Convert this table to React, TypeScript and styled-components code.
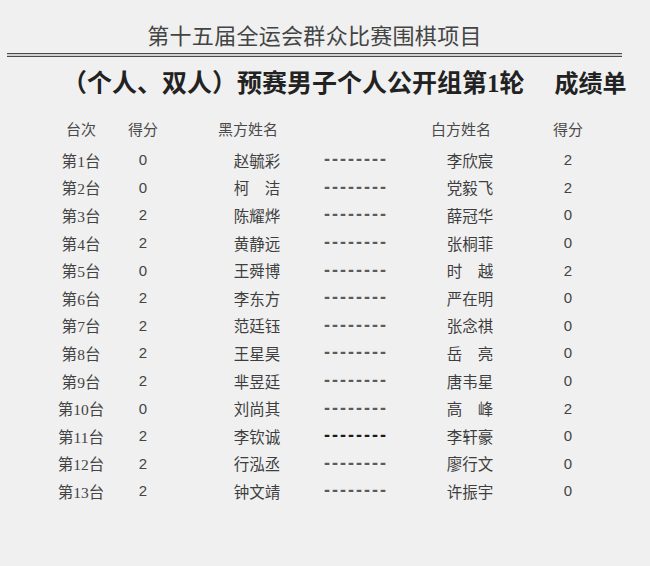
import styled, { createGlobalStyle } from "styled-components";

const GlobalStyle = createGlobalStyle`
  html, body {
    margin: 0;
    padding: 0;
    background: #f0f0f0;
  }
  body {
    font-family: "Liberation Serif", "Noto Sans CJK SC", serif;
    color: #3a3a3a;
  }
`;

interface Match {
  no: number;
  blackScore: number;
  black: string;
  white: string;
  whiteScore: number;
  dark?: boolean;
}

const matches: Match[] = [
  { no: 1, blackScore: 0, black: "赵毓彩", white: "李欣宸", whiteScore: 2 },
  { no: 2, blackScore: 0, black: "柯　洁", white: "党毅飞", whiteScore: 2 },
  { no: 3, blackScore: 2, black: "陈耀烨", white: "薛冠华", whiteScore: 0 },
  { no: 4, blackScore: 2, black: "黄静远", white: "张桐菲", whiteScore: 0 },
  { no: 5, blackScore: 0, black: "王舜博", white: "时　越", whiteScore: 2 },
  { no: 6, blackScore: 2, black: "李东方", white: "严在明", whiteScore: 0 },
  { no: 7, blackScore: 2, black: "范廷钰", white: "张念祺", whiteScore: 0 },
  { no: 8, blackScore: 2, black: "王星昊", white: "岳　亮", whiteScore: 0 },
  { no: 9, blackScore: 2, black: "芈昱廷", white: "唐韦星", whiteScore: 0 },
  { no: 10, blackScore: 0, black: "刘尚其", white: "高　峰", whiteScore: 2 },
  { no: 11, blackScore: 2, black: "李钦诚", white: "李轩豪", whiteScore: 0, dark: true },
  { no: 12, blackScore: 2, black: "行泓丞", white: "廖行文", whiteScore: 0 },
  { no: 13, blackScore: 2, black: "钟文靖", white: "许振宇", whiteScore: 0 },
];

const Page = styled.div`
  width: 650px;
  height: 566px;
  padding-top: 19px;
  box-sizing: border-box;
`;

const Masthead = styled.div`
  width: 615px;
  margin-left: 7px;
`;

const Title = styled.h1`
  margin: 0;
  font-family: "Noto Sans CJK SC", sans-serif;
  font-weight: 400;
  font-size: 22px;
  line-height: 30px;
  letter-spacing: 0.3px;
  text-align: center;
  color: #444;
`;

const DoubleRule = styled.div`
  margin-top: 4px;
  height: 2px;
  border-top: 1px solid #4a4a4a;
  border-bottom: 1px solid #4a4a4a;
  background: #cfcfcf;
`;

const Subtitle = styled.h2`
  margin: 11px 0 0 62px;
  font-family: "Liberation Serif", "Noto Sans CJK SC", serif;
  font-weight: 700;
  font-size: 25px;
  line-height: 32px;
  white-space: nowrap;
  color: #222;
`;

const SubtitleTail = styled.span`
  margin-left: 30px;
  font-size: 24px;
`;

const HeaderRow = styled.div`
  display: flex;
  margin: 16px 0 0 50px;
  height: 24px;
  align-items: center;
  font-family: "Noto Sans CJK SC", sans-serif;
  font-size: 15px;
  color: #4a4a4a;
`;

const Rows = styled.div`
  margin: 6px 0 0 50px;
`;

const Row = styled.div`
  display: flex;
  height: 27.6px;
  align-items: center;
  font-size: 15.5px;
`;

const Cell = styled.div<{ $w: number; $ml?: number }>`
  width: ${(p) => p.$w}px;
  margin-left: ${(p) => p.$ml ?? 0}px;
  flex: none;
  text-align: center;
  white-space: nowrap;
`;

const Board = styled(Cell)`
  font-family: "Liberation Serif", "Noto Sans CJK SC", serif;
  color: #444;
`;

const Score = styled(Cell)`
  font-family: "Liberation Sans", sans-serif;
  font-size: 15px;
  color: #444;
`;

const Name = styled(Cell)`
  font-family: "Noto Sans CJK SC", sans-serif;
  font-size: 15.5px;
  color: #3e3e3e;
`;

const Dashes = styled(Cell)<{ $dark?: boolean }>`
  font-family: "Liberation Sans", sans-serif;
  font-size: 18px;
  font-weight: 700;
  letter-spacing: 2px;
  text-indent: 2px;
  color: ${(p) => (p.$dark ? "#1a1a1a" : "#5a5a5a")};
`;

export default function App() {
  return (
    <Page>
      <GlobalStyle />
      <Masthead>
        <Title>第十五届全运会群众比赛围棋项目</Title>
        <DoubleRule />
      </Masthead>
      <Subtitle>
        （个人、双人）预赛男子个人公开组第1轮
        <SubtitleTail>成绩单</SubtitleTail>
      </Subtitle>
      <HeaderRow>
        <Cell $w={62}>台次</Cell>
        <Cell $w={62}>得分</Cell>
        <Cell $w={148}>黑方姓名</Cell>
        <Cell $w={122} $ml={78}>白方姓名</Cell>
        <Cell $w={48} $ml={22}>得分</Cell>
      </HeaderRow>
      <Rows>
        {matches.map((m) => (
          <Row key={m.no}>
            <Board $w={62}>第{m.no}台</Board>
            <Score $w={62}>{m.blackScore}</Score>
            <Name $w={114} $ml={26}>{m.black}</Name>
            <Dashes $w={82} $dark={m.dark}>--------</Dashes>
            <Name $w={148}>{m.white}</Name>
            <Score $w={48}>{m.whiteScore}</Score>
          </Row>
        ))}
      </Rows>
    </Page>
  );
}
